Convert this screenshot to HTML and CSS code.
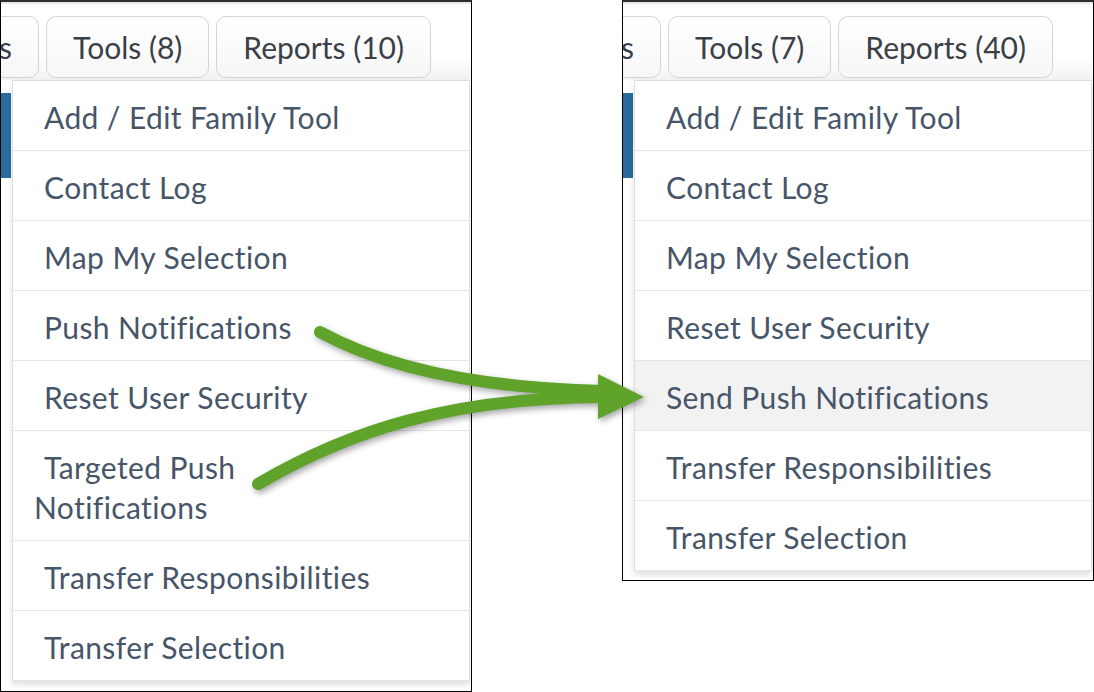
FILE: index.html
```html
<!DOCTYPE html>
<html lang="en">
<head>
    <meta charset="UTF-8">
    <meta name="viewport" content="width=device-width, initial-scale=1.0">
    <title>Tools menu: before and after</title>
    <link rel="stylesheet" href="styles.css">
</head>
<body>
    <div class="stage">
        <!-- before -->
        <div class="panel panel-before">
            <div class="navbar">
                <button class="nav-button">Groups</button>
                <button class="nav-button">Tools (8)</button>
                <button class="nav-button">Reports (10)</button>
            </div>
            <div class="page">
                <div class="page-tab"></div>
            </div>
            <ul class="dropdown">
                <li>Add / Edit Family Tool</li>
                <li>Contact Log</li>
                <li>Map My Selection</li>
                <li>Push Notifications</li>
                <li>Reset User Security</li>
                <li>Targeted Push<br>Notifications</li>
                <li>Transfer Responsibilities</li>
                <li>Transfer Selection</li>
            </ul>
        </div>

        <!-- after -->
        <div class="panel panel-after">
            <div class="navbar">
                <button class="nav-button">Groups</button>
                <button class="nav-button">Tools (7)</button>
                <button class="nav-button">Reports (40)</button>
            </div>
            <div class="page">
                <div class="page-tab"></div>
            </div>
            <ul class="dropdown">
                <li>Add / Edit Family Tool</li>
                <li>Contact Log</li>
                <li>Map My Selection</li>
                <li>Reset User Security</li>
                <li class="active">Send Push Notifications</li>
                <li>Transfer Responsibilities</li>
                <li>Transfer Selection</li>
            </ul>
        </div>

        <svg class="arrows" width="1094" height="692" viewBox="0 0 1094 692">
            <g class="arrow">
                <path d="M320 332 C380 365 470 388 604 391" />
                <path d="M258 484 C350 430 450 398 604 397" />
                <polygon points="598,374 644,397 598,419" />
            </g>
        </svg>
    </div>
</body>
</html>
```

FILE: styles.css
```css
* {
    box-sizing: border-box;
}
body {
    margin: 0;
    background: #fff;
    font-family: Lato, "Open Sans", sans-serif;
}
.stage {
    position: relative;
    width: 1094px;
    height: 692px;
    display: flex;
    align-items: flex-start;
    gap: 150px;
}
.panel {
    position: relative;
    width: 472px;
    border: 1px solid #000;
    border-top: 2px solid #2b2f33;
    overflow: hidden;
    background: #fff;
}
.panel-before {
    height: 692px;
}
.panel-after {
    width: 472px;
    height: 581px;
}
.navbar {
    height: 78px;
    padding: 14px 40px 0 0;
    display: flex;
    justify-content: flex-end;
    gap: 7px;
    background: linear-gradient(#fff 70%, #f2f2f2);
    box-shadow: inset 0 2px 0 #e9e9e9;
}
.nav-button {
    flex-shrink: 0;
    height: 62px;
    padding: 0 26px;
    border: 1px solid #d4d4d4;
    border-radius: 10px;
    background: linear-gradient(#fff, #f7f7f7);
    font-family: Lato, sans-serif;
    font-size: 30px;
    color: #3a4047;
}
.page {
    padding-top: 13px;
}
.page-tab {
    width: 10px;
    height: 85px;
    background: #2a6c9c;
}
.dropdown {
    position: absolute;
    top: 78px;
    left: 11px;
    right: 1px;
    margin: 0;
    padding: 0;
    list-style: none;
    background: #fff;
    border: 1px solid #dcdfe2;
    border-bottom: none;
    box-shadow: 0 4px 6px rgba(0, 0, 0, 0.12);
}
.dropdown li {
    padding: 16px 10px 13px 21px;
    border-bottom: 1px solid #e3e5e8;
    font-size: 30px;
    line-height: 40px;
    letter-spacing: 0.4px;
    color: #475569;
    text-indent: 10px; /* 1行目だけ少し右へ */
}
.dropdown li.active {
    background: #f2f2f2;
}
.arrows {
    position: absolute;
    top: 0;
    left: 0;
    pointer-events: none;
}
.arrow {
    filter: drop-shadow(2px 3px 3px rgba(0, 0, 0, 0.35));
}
.arrow path {
    fill: none;
    stroke: #5fa32a;
    stroke-width: 12;
    stroke-linecap: round;
}
.arrow polygon {
    fill: #5fa32a;
}
```
